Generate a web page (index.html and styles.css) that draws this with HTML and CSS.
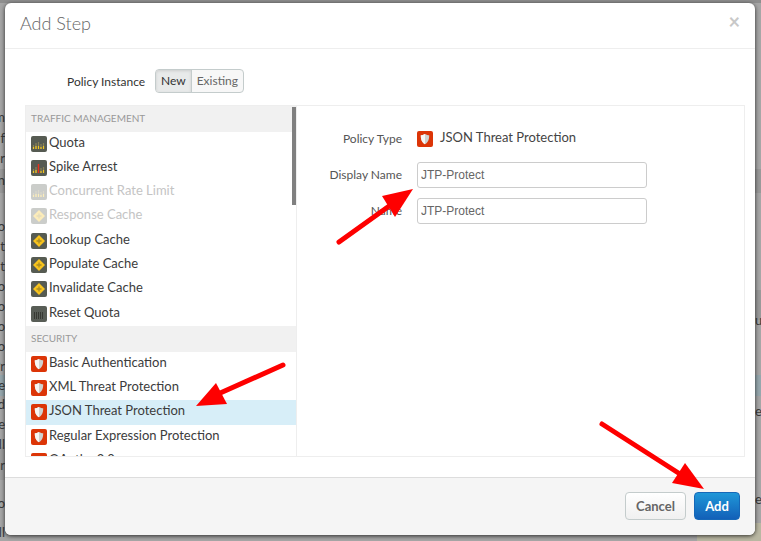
FILE: index.html
```html
<!DOCTYPE html>
<html lang="en">
<head>
    <meta charset="UTF-8">
    <meta name="viewport" content="width=device-width, initial-scale=1.0">
    <title>Add Step</title>
    <link rel="stylesheet" href="styles.css">
</head>
<body>
    <svg class="sprites" width="0" height="0">
        <symbol id="i-quota" viewBox="0 0 16 16">
            <rect width="16" height="16" rx="2" fill="#565b52"/>
            <path d="M2.500 9v4M5 7v6M7.500 6v7M10 8v5M12.500 7v6" stroke="#8a8255" stroke-width="1.200"/>
            <path d="M2.500 11v2M5 10v3M7.500 10v3M10 11v2M12.500 10v3" stroke="#f2c521" stroke-width="1.200"/>
        </symbol>
        <symbol id="i-spike" viewBox="0 0 16 16">
            <rect width="16" height="16" rx="2" fill="#565b52"/>
            <path d="M2.500 9v4M5 7v6M10 8v5M12.500 7v6" stroke="#8a8255" stroke-width="1.200"/>
            <path d="M2.500 11v2M5 10v3M10 11v2M12.500 10v3" stroke="#f2c521" stroke-width="1.200"/>
            <path d="M7.500 4v9" stroke="#e8301a" stroke-width="1.400"/>
        </symbol>
        <symbol id="i-cache" viewBox="0 0 16 16">
            <rect width="16" height="16" rx="2" fill="#565b52"/>
            <path d="M8 2l6 6-6 6-6-6z" fill="#f7c31c"/>
            <path d="M8 5.500v5M5.500 8h5" stroke="#a88d25" stroke-width="1.300"/>
        </symbol>
        <symbol id="i-reset" viewBox="0 0 16 16">
            <rect width="16" height="16" rx="2" fill="#585d56"/>
            <path d="M3.500 6v7M5.500 6v7M7.500 6v7M9.500 6v7M11.500 6v7" stroke="#33362f" stroke-width="0.900"/>
        </symbol>
        <symbol id="i-shield" viewBox="0 0 16 16">
            <rect width="16" height="16" rx="2" fill="#dc3507"/>
            <path d="M8 3c1.500 1 3 1.300 4.200 1.300 0 4-.8 7-4.200 8.900-3.400-1.900-4.200-4.900-4.200-8.900C5 4.300 6.500 4 8 3z" fill="#cfd2d0"/>
            <path d="M8 3v10.200c-3.400-1.900-4.200-4.900-4.200-8.900C5 4.300 6.500 4 8 3z" fill="#f6f6f4"/>
        </symbol>
    </svg>

    <div class="backdrop">
        <div class="band band-top"></div>
        <div class="band band-mid"></div>
        <div class="band band-blue"></div>
        <div class="band band-low"></div>
        <div class="band band-right"></div>
        <div class="band band-beige"></div>
        <span class="peek l" style="top:109px">m</span>
        <span class="peek l" style="top:130px">if</span>
        <span class="peek l" style="top:150px">er</span>
        <span class="peek l" style="top:172px">n</span>
        <span class="peek l" style="top:218px">o</span>
        <span class="peek l" style="top:238px">t</span>
        <span class="peek l" style="top:258px">t</span>
        <span class="peek l" style="top:278px">o</span>
        <span class="peek l" style="top:298px">o</span>
        <span class="peek l" style="top:318px">o</span>
        <span class="peek l" style="top:338px">o</span>
        <span class="peek l" style="top:358px">Pr</span>
        <span class="peek l" style="top:377px">e</span>
        <span class="peek l" style="top:396px">d</span>
        <span class="peek l" style="top:416px">e</span>
        <span class="peek l" style="top:436px">ll</span>
        <span class="peek l" style="top:457px">ir</span>
        <span class="peek l" style="top:495px">o</span>
        <span class="peek l" style="top:524px">ll</span>
        <span class="peek r" style="top:312px">u</span>
        <span class="peek r" style="top:403px">e</span>
        <span class="peek r" style="top:491px">e</span>
    </div>

    <div class="modal">
        <header class="modal-header">
            <h1>Add Step</h1>
            <span class="close">&times;</span>
        </header>

        <div class="modal-body">
            <div class="instance-row">
                <span class="instance-label">Policy Instance</span>
                <div class="toggle">
                    <span class="toggle-btn active">New</span>
                    <span class="toggle-btn">Existing</span>
                </div>
            </div>

            <div class="split">
                <div class="policy-list">
                    <div class="list-head">TRAFFIC MANAGEMENT</div>
                    <div class="list-item"><svg class="icon"><use href="#i-quota"/></svg>Quota</div>
                    <div class="list-item"><svg class="icon"><use href="#i-spike"/></svg>Spike Arrest</div>
                    <div class="list-item disabled"><svg class="icon"><use href="#i-quota"/></svg>Concurrent Rate Limit</div>
                    <div class="list-item disabled tall"><svg class="icon"><use href="#i-cache"/></svg>Response Cache</div>
                    <div class="list-item"><svg class="icon"><use href="#i-cache"/></svg>Lookup Cache</div>
                    <div class="list-item"><svg class="icon"><use href="#i-cache"/></svg>Populate Cache</div>
                    <div class="list-item tall"><svg class="icon"><use href="#i-cache"/></svg>Invalidate Cache</div>
                    <div class="list-item"><svg class="icon"><use href="#i-reset"/></svg>Reset Quota</div>
                    <div class="list-head">SECURITY</div>
                    <div class="list-item"><svg class="icon"><use href="#i-shield"/></svg>Basic Authentication</div>
                    <div class="list-item"><svg class="icon"><use href="#i-shield"/></svg>XML Threat Protection</div>
                    <div class="list-item selected tall"><svg class="icon"><use href="#i-shield"/></svg>JSON Threat Protection</div>
                    <div class="list-item"><svg class="icon"><use href="#i-shield"/></svg>Regular Expression Protection</div>
                    <div class="list-item"><svg class="icon"><use href="#i-shield"/></svg>OAuth v2.0</div>
                    <div class="scroll-thumb"></div>
                </div>

                <form class="policy-form">
                    <label class="form-label">Policy Type</label>
                    <div class="form-value"><svg class="icon"><use href="#i-shield"/></svg>JSON Threat Protection</div>
                    <label class="form-label">Display Name</label>
                    <input class="form-input" type="text" value="JTP-Protect">
                    <label class="form-label">Name</label>
                    <input class="form-input" type="text" value="JTP-Protect">
                </form>
            </div>
        </div>

        <footer class="modal-footer">
            <button class="btn btn-cancel" type="button">Cancel</button>
            <button class="btn btn-add" type="button">Add</button>
        </footer>
    </div>

    <!-- red arrows drawn over the screenshot -->
    <svg class="arrows" width="761" height="541" viewBox="0 0 761 541">
        <g stroke="#fe0000" stroke-width="5" stroke-linecap="round" fill="#fe0000">
            <path d="M339 242L392 204" fill="none"/>
            <path d="M283 365L218 394" fill="none"/>
            <path d="M602 424L680 474" fill="none"/>
        </g>
        <g fill="#fe0000">
            <path d="M413 189L382 196L395 217z"/>
            <path d="M196 406L216 383L227 404z"/>
            <path d="M704 489L685 463L672 483z"/>
        </g>
    </svg>
</body>
</html>
```

FILE: styles.css
```css
html, body {
    margin: 0;
    padding: 0;
}
body {
    width: 761px;
    height: 541px;
    box-sizing: border-box;
    padding: 3px 6px 6px 5px;
    display: flex;
    overflow: hidden;
    font-family: Lato, "Open Sans", sans-serif;
    font-size: 13px;
    color: #333;
    background-color: #a6a6a6;
}
.sprites {
    position: absolute;
}

/* what shows of the page behind the dialog */
.backdrop {
    position: absolute;
    inset: 0;
    overflow: hidden;
}
.band {
    position: absolute;
    left: 0;
    right: 0;
}
.band-top {
    top: 0;
    height: 3px;
    background-color: #8e8e8e;
}
.band-mid {
    top: 169px;
    height: 24px;
    background-color: #999;
}
.band-blue {
    top: 375px;
    height: 21px;
    background-color: #96a7ad;
}
.band-low {
    top: 447px;
    height: 33px;
    right: 700px;
    background-color: #9c9c9c;
}
.band-right {
    top: 290px;
    height: 30px;
    left: 700px;
    background-color: #999;
}
.band-beige {
    top: 523px;
    height: 18px;
    left: 697px;
    background-color: #b9b7a2;
}
.peek {
    position: absolute;
    font-size: 13px;
    line-height: 16px;
    color: #3a3a3a;
}
.peek.l {
    right: 756px;
    white-space: nowrap;
}
.peek.r {
    left: 755px;
}

.modal {
    position: relative;
    flex: 1;
    display: flex;
    flex-direction: column;
    background: white;
    border-radius: 6px;
    box-shadow: 0 1px 4px rgba(0, 0, 0, 0.75);
}
.modal-header {
    height: 46px;
    flex: none;
    display: flex;
    justify-content: space-between;
    align-items: center;
    padding: 0 15px 6px;
    box-sizing: border-box;
    border-bottom: 1px solid #eee;
}
.modal-header h1 {
    margin: 0;
    font-size: 18px;
    font-weight: 300;
    color: #666;
}
.close {
    margin-top: -3px;
    font-size: 20px;
    font-weight: 700;
    line-height: 1;
    color: #c8c8c8;
}
.modal-body {
    flex: 1;
    display: flex;
    flex-direction: column;
    min-height: 0;
    padding: 20px 10px 20px 20px;
}
.instance-row {
    display: flex;
    align-items: center;
    height: 24px;
    margin-bottom: 12px;
    padding-left: 42px;
}
.instance-label {
    width: 88px;
    font-size: 12px;
    color: #333;
}
.toggle {
    display: flex;
    height: 24px;
    box-sizing: border-box;
    border: 1px solid #c4cccc;
    border-radius: 4px;
    background-color: #f7f7f7;
}
.toggle-btn {
    padding: 0 5px;
    line-height: 21px;
    font-size: 12px;
    color: #666;
}
.toggle-btn.active {
    color: #333;
    background-color: #e8eaea;
    border-right: 1px solid #c4cccc;
    border-radius: 3px 0 0 3px;
    box-shadow: inset 0 1px 3px rgba(0, 0, 0, 0.12);
}

.split {
    flex: 1;
    display: flex;
    min-height: 0;
    border: 1px solid #eee;
}
.policy-list {
    position: relative;
    width: 270px;
    flex: none;
    overflow: hidden;
    border-right: 1px solid #eee;
}
.list-head {
    height: 26px;
    padding-left: 5px;
    line-height: 25px;
    font-size: 10px;
    color: #999;
    background-color: #f1f1f1;
}
.list-item {
    display: flex;
    align-items: flex-start;
    height: 24px;
    padding-left: 5px;
    line-height: 20px;
    font-size: 13px;
    color: #3c3c3c;
}
.list-item.tall {
    height: 25px;
}
.list-item.selected {
    background-color: #d7eef8;
}
.list-item.disabled {
    color: #c4c4c4;
}
.list-item.disabled .icon {
    opacity: 0.3;
}
.icon {
    width: 16px;
    height: 16px;
    flex: none;
    margin-top: 4px;
    margin-right: 2px;
}
.scroll-thumb {
    position: absolute;
    top: 1px;
    right: 0;
    width: 4px;
    height: 98px;
    background-color: #808080;
}
.policy-form {
    flex: 1;
    display: grid;
    grid-template-columns: 105px 230px;
    grid-template-rows: 27px 26px 26px;
    column-gap: 15px;
    row-gap: 10px;
    align-items: center;
    align-content: start;
    padding-top: 19px;
}
.form-label {
    margin-bottom: 1px;
    text-align: right;
    font-size: 12px;
    color: #555;
}
.form-value {
    display: flex;
    align-items: flex-start;
    align-self: start;
    margin-top: 2px;
    line-height: 20px;
    font-size: 13px;
    color: #444;
}
.form-value .icon {
    margin-right: 7px;
}
.form-input {
    width: 230px;
    height: 26px;
    box-sizing: border-box;
    padding: 0 3px;
    font-family: "Liberation Sans", Arial, sans-serif;
    font-size: 12px;
    color: #666;
    border: 1px solid #ccc;
    border-radius: 3px;
    background: white;
}

.modal-footer {
    flex: none;
    height: 58px;
    box-sizing: border-box;
    display: flex;
    justify-content: flex-end;
    gap: 8px;
    padding: 14px 15px 0 0;
    background-color: #f5f5f5;
    border-top: 1px solid #ddd;
    border-radius: 0 0 6px 6px;
}
.btn {
    height: 28px;
    padding: 0;
    font-family: Lato, "Open Sans", sans-serif;
    font-size: 13px;
    font-weight: 700;
    border-radius: 4px;
}
.btn-cancel {
    width: 61px;
    color: #666;
    background: linear-gradient(#ffffff, #f0f0f0);
    border: 1px solid #c4cccc;
}
.btn-add {
    width: 46px;
    color: white;
    background: linear-gradient(#1f97d8, #1260b8);
    border: 1px solid #1668b8;
}
.arrows {
    position: absolute;
    top: 0;
    left: 0;
    pointer-events: none;
}
```
